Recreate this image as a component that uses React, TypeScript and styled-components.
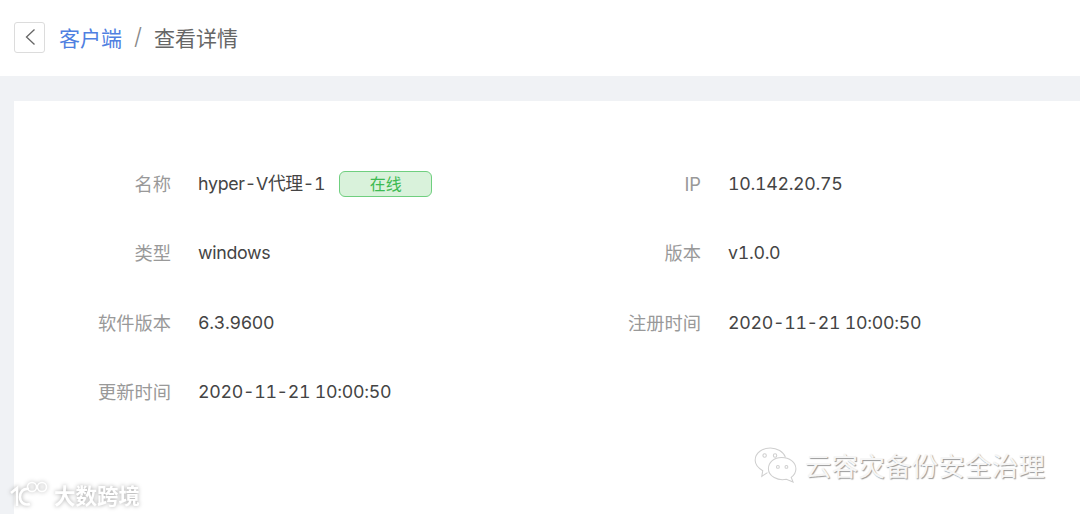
import React from 'react'
import styled, { createGlobalStyle } from 'styled-components'

const GlobalStyle = createGlobalStyle`
  html, body {
    margin: 0;
    padding: 0;
    background: #fff;
  }
  body {
    font-family: Inter, "Noto Sans CJK SC", sans-serif;
  }
`

const fields = [
  { label: '名称', value: 'hyper-V代理-1', online: true },
  { label: 'IP', value: '10.142.20.75' },
  { label: '类型', value: 'windows' },
  { label: '版本', value: 'v1.0.0' },
  { label: '软件版本', value: '6.3.9600' },
  { label: '注册时间', value: '2020-11-21 10:00:50' },
  { label: '更新时间', value: '2020-11-21 10:00:50' },
]

export default function App() {
  return (
    <Page>
      <GlobalStyle />
      <Header>
        <BackButton aria-label="back">
          <svg width="12" height="20" viewBox="0 0 12 20" fill="none">
            <path d="M10.5 2.5 2.5 10l8 7.5" stroke="#666" strokeWidth="1.3" />
          </svg>
        </BackButton>
        <Crumb>客户端</Crumb>
        <Slash>/</Slash>
        <Current>查看详情</Current>
      </Header>
      <Body>
        <Card>
          <DetailGrid>
            {fields.map(f => (
              <Field key={f.label}>
                <Label>{f.label}</Label>
                <Value>{f.value}</Value>
                {f.online && <StatusTag>在线</StatusTag>}
              </Field>
            ))}
          </DetailGrid>
          <AccountMark>
            <svg width="44" height="36" viewBox="0 0 46 38" fill="none" stroke="#cfcfcf" strokeWidth="1.1">
              <path d="M14 27 8 31l1-6C4 22 1 18 1 14 1 6 9 1 17 1c7 0 14 4 16 10" />
              <path d="M29 11c8 0 15 5 15 12 0 4-2 7-5 9l2 5-7-3c-9 2-19-3-19-11 0-7 6-12 14-12Z" />
              <circle cx="11" cy="9" r="1.8" />
              <circle cx="22" cy="9" r="1.8" />
              <circle cx="25" cy="21" r="1.5" />
              <circle cx="34" cy="21" r="1.5" />
            </svg>
            <AccountName>云容灾备份安全治理</AccountName>
          </AccountMark>
        </Card>
      </Body>
      <SiteMark>
        <svg width="40" height="28" viewBox="0 0 40 28" fill="none" stroke="#fff" strokeWidth="2.6">
          <path d="M3 12 9 7v18" />
          <path d="M21 8c-6-1-9 3-9 8s4 9 10 7" />
          <circle cx="24" cy="6" r="4.5" strokeWidth="1.6" />
          <circle cx="34" cy="6" r="4.5" strokeWidth="1.6" />
        </svg>
        <SiteName>大数跨境</SiteName>
      </SiteMark>
    </Page>
  )
}

const Page = styled.div`
  position: relative;
  width: 1080px;
  height: 514px;
  overflow: hidden;
  background: #f0f2f5;
  color: #333;
`

const Header = styled.header`
  display: flex;
  align-items: center;
  height: 76px;
  padding: 0 0 2px 14px;
  box-sizing: border-box;
  background: #fff;
  font-size: 21px;
`

const BackButton = styled.button`
  display: flex;
  align-items: center;
  justify-content: center;
  width: 31px;
  height: 31px;
  margin-right: 14px;
  padding: 0;
  border: 1px solid #dcdcdc;
  border-radius: 3px;
  background: #fff;
`

const Crumb = styled.span`
  color: #4f80e1;
`

const Slash = styled.span`
  margin: 0 12px;
  color: #888;
  font-size: 23px;
  font-weight: 300;
`

const Current = styled.span`
  color: #666;
`

const Body = styled.main`
  height: 438px;
  padding: 25px 0 0 14px;
  box-sizing: border-box;
`

const Card = styled.section`
  position: relative;
  height: 413px;
  padding-top: 66px;
  box-sizing: border-box;
  background: #fff;
`

const DetailGrid = styled.div`
  display: grid;
  grid-template-columns: 530px 1fr;
  grid-auto-rows: 69.3px;
`

const Field = styled.div`
  display: flex;
  align-items: center;
  height: 34px;
  font-size: 18px;
  line-height: 34px;
`

const Label = styled.span`
  flex: none;
  width: 157px;
  margin-right: 27px;
  text-align: right;
  color: #999;
  font-size: 18.25px;
`

const Value = styled.span`
  color: #444;
  font-variant-numeric: tabular-nums;
  font-size: 17.8px;
  letter-spacing: -0.3px;
`

const StatusTag = styled.span`
  display: flex;
  align-items: center;
  justify-content: center;
  width: 91px;
  height: 24px;
  margin-left: 14px;
  border: 1px solid #6fcf7f;
  border-radius: 6px;
  background: #d9f2db;
  color: #3dba52;
  font-size: 16px;
`

const AccountMark = styled.div`
  position: absolute;
  right: 35px;
  bottom: 30px;
  display: flex;
  align-items: center;
  gap: 7px;
`

const AccountName = styled.span`
  font-size: 26.7px;
  color: #f6f6f6;
  text-shadow: 1px 1px 1px #999;
`

const SiteMark = styled.div`
  position: absolute;
  left: 8px;
  bottom: 4px;
  display: flex;
  align-items: center;
  gap: 6px;
  filter: drop-shadow(0 0 2px #aaa);
`

const SiteName = styled.span`
  font-size: 21.5px;
  font-weight: 700;
  color: #fff;
`
